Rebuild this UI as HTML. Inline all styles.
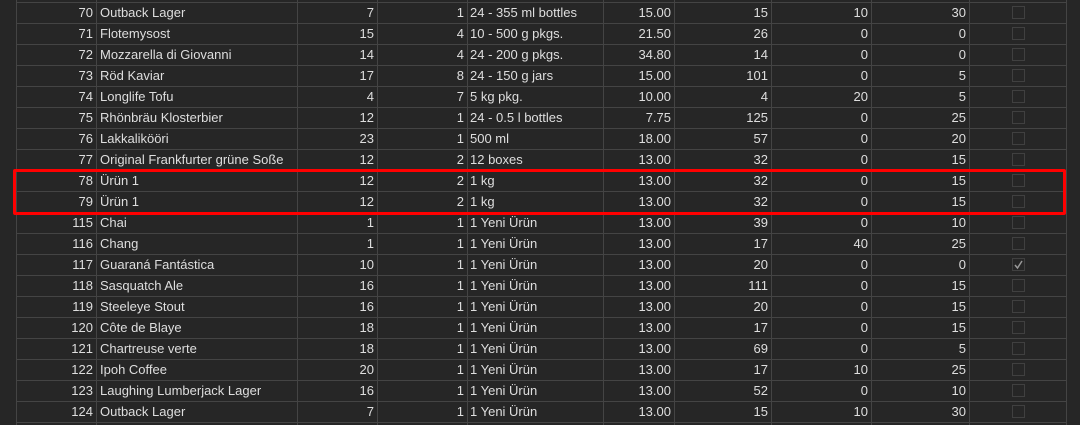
<!DOCTYPE html>
<html><head><meta charset="utf-8"><style>
body{margin:0;width:1080px;height:425px;background:#262626;overflow:hidden;font-family:"Liberation Sans",sans-serif;font-size:13px;color:#dedede;position:relative}
.hl{position:absolute;left:16px;width:1051px;height:1px;background:#444}
.vl{position:absolute;top:0;height:425px;width:1px;background:#444}
.c{position:absolute;height:21px;line-height:21px;white-space:nowrap}
.r{text-align:right}
.cb{position:absolute;left:1012px;width:11px;height:11px;border:1px solid #404040}
.red{position:absolute;left:13px;top:169px;width:1047px;height:40px;border:3px solid #f00;border-radius:2px}
</style></head><body>
<div id="g"></div>
<div class="red"></div>
<script>
var rows=[
[70,"Outback Lager",7,1,"24 - 355 ml bottles","15.00",15,10,30,0],
[71,"Flotemysost",15,4,"10 - 500 g pkgs.","21.50",26,0,0,0],
[72,"Mozzarella di Giovanni",14,4,"24 - 200 g pkgs.","34.80",14,0,0,0],
[73,"Röd Kaviar",17,8,"24 - 150 g jars","15.00",101,0,5,0],
[74,"Longlife Tofu",4,7,"5 kg pkg.","10.00",4,20,5,0],
[75,"Rhönbräu Klosterbier",12,1,"24 - 0.5 l bottles","7.75",125,0,25,0],
[76,"Lakkalikööri",23,1,"500 ml","18.00",57,0,20,0],
[77,"Original Frankfurter grüne Soße",12,2,"12 boxes","13.00",32,0,15,0],
[78,"Ürün 1",12,2,"1 kg","13.00",32,0,15,0],
[79,"Ürün 1",12,2,"1 kg","13.00",32,0,15,0],
[115,"Chai",1,1,"1 Yeni Ürün","13.00",39,0,10,0],
[116,"Chang",1,1,"1 Yeni Ürün","13.00",17,40,25,0],
[117,"Guaraná Fantástica",10,1,"1 Yeni Ürün","13.00",20,0,0,1],
[118,"Sasquatch Ale",16,1,"1 Yeni Ürün","13.00",111,0,15,0],
[119,"Steeleye Stout",16,1,"1 Yeni Ürün","13.00",20,0,15,0],
[120,"Côte de Blaye",18,1,"1 Yeni Ürün","13.00",17,0,15,0],
[121,"Chartreuse verte",18,1,"1 Yeni Ürün","13.00",69,0,5,0],
[122,"Ipoh Coffee",20,1,"1 Yeni Ürün","13.00",17,10,25,0],
[123,"Laughing Lumberjack Lager",16,1,"1 Yeni Ürün","13.00",52,0,10,0],
[124,"Outback Lager",7,1,"1 Yeni Ürün","13.00",15,10,30,0]];
var h="";
[16,96,297,377,467,603,674,771,871,969,1066].forEach(function(x){h+='<div class="vl" style="left:'+x+'px"></div>'});
for(var k=0;k<21;k++)h+='<div class="hl" style="top:'+(2+21*k)+'px"></div>';
rows.forEach(function(r,i){var t=2+21*i;
function R(v,rx){h+='<div class="c r" style="top:'+t+'px;right:'+(1080-rx)+'px">'+v+'</div>'}
function L(v,lx){h+='<div class="c" style="top:'+t+'px;left:'+lx+'px">'+v+'</div>'}
R(r[0],93);L(r[1],100);R(r[2],374);R(r[3],464);L(r[4],470);R(r[5],671);R(r[6],768);R(r[7],868);R(r[8],966);
h+='<div class="cb" style="top:'+(t+4)+'px">'+(r[9]?'<svg width="11" height="11" style="display:block"><path d="M2 6l2.5 3L9 2" stroke="#999" stroke-width="1.5" fill="none"/></svg>':'')+'</div>';
});
document.getElementById("g").innerHTML=h;
</script>
</body></html>
